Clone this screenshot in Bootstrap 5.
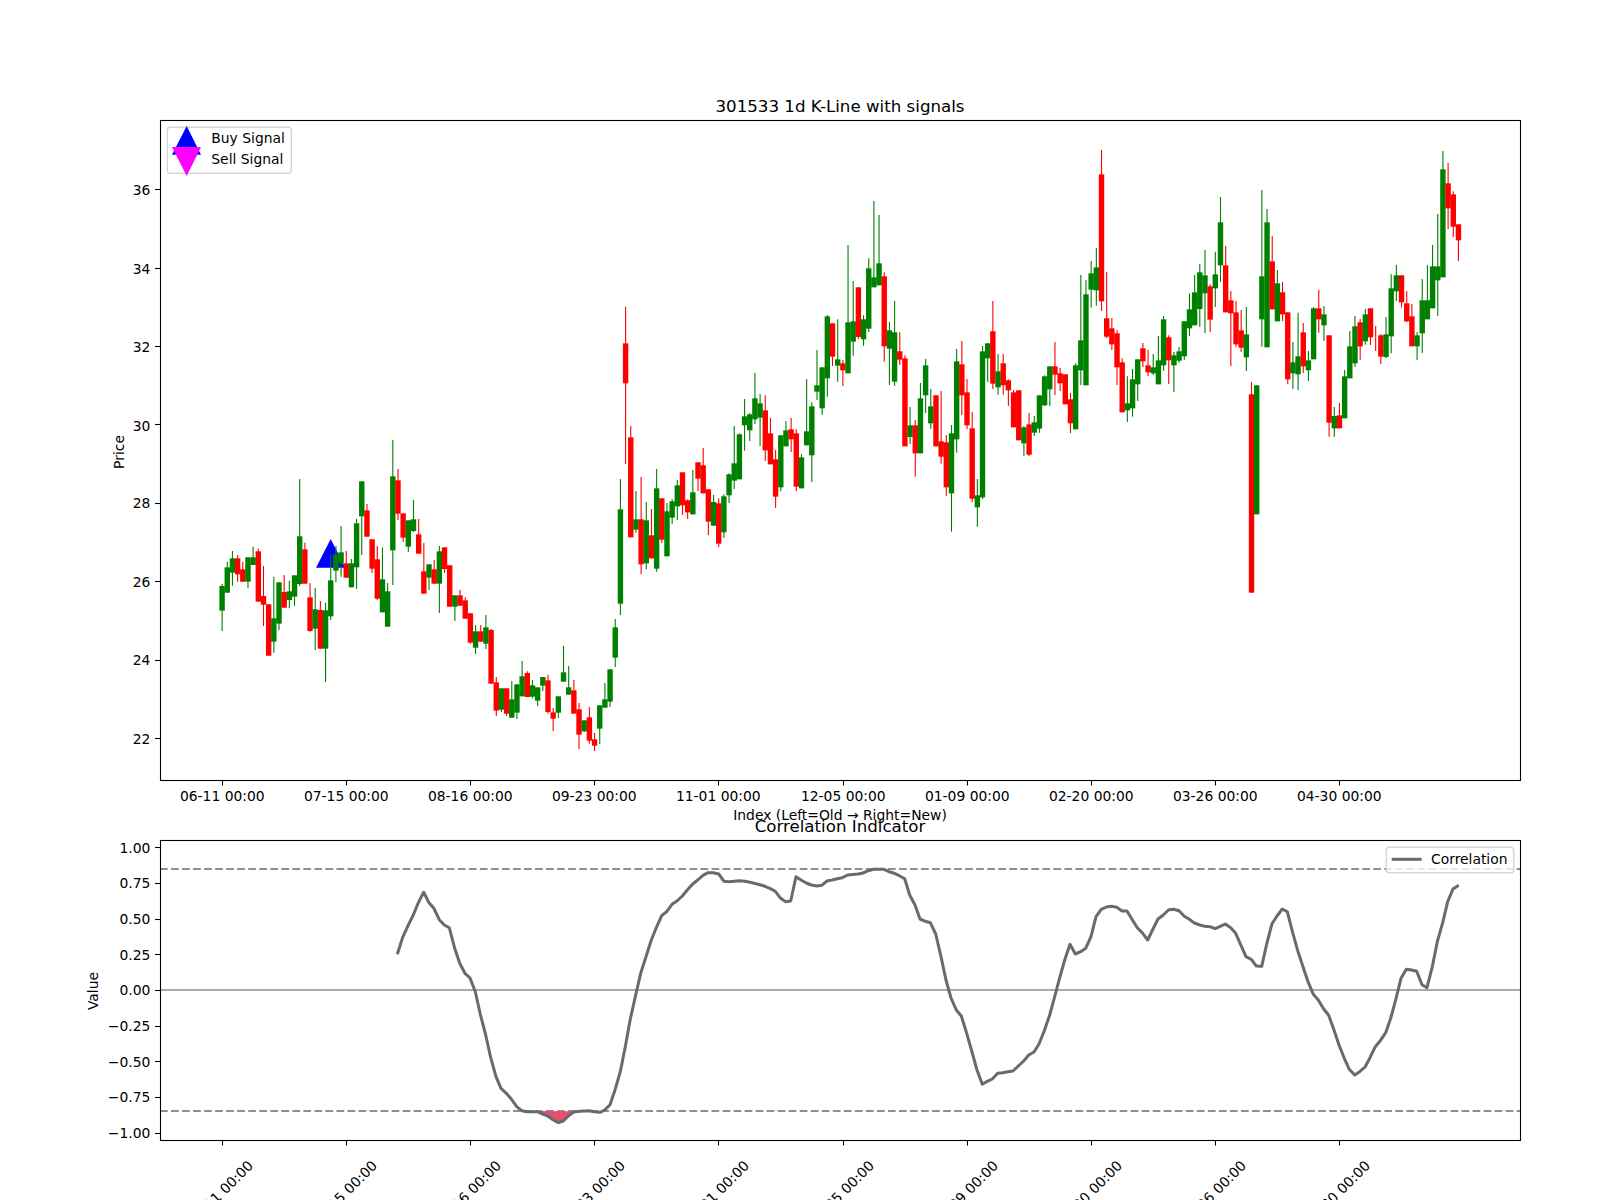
<!DOCTYPE html>
<html lang="en">
<head>
<meta charset="utf-8">
<title>301533 1d K-Line with signals</title>
<link href="https://cdn.jsdelivr.net/npm/bootstrap@5.3.0/dist/css/bootstrap.min.css" rel="stylesheet">
<style>
html,body{margin:0;background:#fff;overflow:hidden}
.figure-frame{width:1600px;height:1200px;overflow:hidden}
.figure-svg{width:1600px;height:1200px}
.figure-svg text{font-family:"DejaVu Sans",sans-serif;font-size:13.89px;fill:#000}
.figure-svg text.plot-title{font-size:16.67px}
.mid{text-anchor:middle}
.end{text-anchor:end}
.spine{fill:none;stroke:#000;stroke-width:1.1}
.tick{stroke:#000;stroke-width:1.1}
.legend-box{fill:#fff;fill-opacity:.8;stroke:#ccc;stroke-opacity:.8;stroke-width:1.4}
.refline{stroke:#8f8f8f;stroke-width:2.2;stroke-dasharray:7.7 3.33}
.zeroline{stroke:#ababab;stroke-width:2.2}
.corr{fill:none;stroke:#6a6a6a;stroke-width:3;stroke-linejoin:round}
</style>
</head>
<body>
<div class="container-fluid p-0 figure-frame">
<svg class="d-block figure-svg" viewBox="0 0 1600 1200" xmlns="http://www.w3.org/2000/svg">
  <polygon points="316,567.7 345.3,567.7 330.7,539" fill="#0000ff"/>
  <g id="candles"></g>
  <rect class="spine" x="160.5" y="120.5" width="1360" height="660"/>
  <g id="ticks"></g>

  <rect class="legend-box" x="167.3" y="127.3" width="124" height="46" rx="3"/>
  <polygon points="172,154.7 201,154.7 186.7,126" fill="#0000ff"/>
  <polygon points="172,147 201,147 186.7,176" fill="#ff00ff"/>
  <text x="211.3" y="143.3">Buy Signal</text>
  <text x="211.3" y="164">Sell Signal</text>

  <text class="plot-title mid" x="840" y="112">301533 1d K-Line with signals</text>
  <text class="mid" transform="translate(124,452) rotate(-90)">Price</text>
  <text class="end" x="150.3" y="195.2">36</text>
  <text class="end" x="150.3" y="273.6">34</text>
  <text class="end" x="150.3" y="352">32</text>
  <text class="end" x="150.3" y="430.6">30</text>
  <text class="end" x="150.3" y="508.4">28</text>
  <text class="end" x="150.3" y="587.2">26</text>
  <text class="end" x="150.3" y="665.2">24</text>
  <text class="end" x="150.3" y="744">22</text>

  <text class="mid" x="222.3" y="801">06-11 00:00</text>
  <text class="mid" x="346.3" y="801">07-15 00:00</text>
  <text class="mid" x="470.3" y="801">08-16 00:00</text>
  <text class="mid" x="594.3" y="801">09-23 00:00</text>
  <text class="mid" x="718.3" y="801">11-01 00:00</text>
  <text class="mid" x="843.3" y="801">12-05 00:00</text>
  <text class="mid" x="967.3" y="801">01-09 00:00</text>
  <text class="mid" x="1091.3" y="801">02-20 00:00</text>
  <text class="mid" x="1215.3" y="801">03-26 00:00</text>
  <text class="mid" x="1339.3" y="801">04-30 00:00</text>
  <text class="mid" x="840" y="820">Index (Left=Old → Right=New)</text>
  <text class="plot-title mid" x="840" y="831.7">Correlation Indicator</text>

  <line class="zeroline" x1="160" x2="1520" y1="990" y2="990"/>
  <line class="refline" x1="160" x2="1520" y1="869" y2="869"/>
  <line class="refline" x1="160" x2="1520" y1="1111" y2="1111"/>
  <polygon id="fillpart" fill="#e5506f"/>
  <polyline id="corr" class="corr"/>
  <rect class="spine" x="160.5" y="840.5" width="1360" height="300"/>

  <rect class="legend-box" x="1386.3" y="847.3" width="127.4" height="25.4" rx="3"/>
  <line x1="1391.7" x2="1421.7" y1="859.3" y2="859.3" stroke="#6a6a6a" stroke-width="3"/>
  <text x="1431" y="864">Correlation</text>

  <text class="mid" transform="translate(98,991) rotate(-90)">Value</text>
  <text class="end" x="150.3" y="852.8">1.00</text>
  <text class="end" x="150.3" y="888.2">0.75</text>
  <text class="end" x="150.3" y="924.2">0.50</text>
  <text class="end" x="150.3" y="959.8">0.25</text>
  <text class="end" x="150.3" y="995.4">0.00</text>
  <text class="end" x="150.3" y="1031">−0.25</text>
  <text class="end" x="150.3" y="1066.8">−0.50</text>
  <text class="end" x="150.3" y="1102.4">−0.75</text>
  <text class="end" x="150.3" y="1138.2">−1.00</text>

  <text class="mid" transform="translate(220.5,1193) rotate(-45) translate(0,5)">06-11 00:00</text>
  <text class="mid" transform="translate(344.5,1193) rotate(-45) translate(0,5)">07-15 00:00</text>
  <text class="mid" transform="translate(468.5,1193) rotate(-45) translate(0,5)">08-16 00:00</text>
  <text class="mid" transform="translate(592.5,1193) rotate(-45) translate(0,5)">09-23 00:00</text>
  <text class="mid" transform="translate(716.5,1193) rotate(-45) translate(0,5)">11-01 00:00</text>
  <text class="mid" transform="translate(841.5,1193) rotate(-45) translate(0,5)">12-05 00:00</text>
  <text class="mid" transform="translate(965.5,1193) rotate(-45) translate(0,5)">01-09 00:00</text>
  <text class="mid" transform="translate(1089.5,1193) rotate(-45) translate(0,5)">02-20 00:00</text>
  <text class="mid" transform="translate(1213.5,1193) rotate(-45) translate(0,5)">03-26 00:00</text>
  <text class="mid" transform="translate(1337.5,1193) rotate(-45) translate(0,5)">04-30 00:00</text>
</svg>
</div>
<script src="https://cdn.jsdelivr.net/npm/bootstrap@5.3.0/dist/js/bootstrap.bundle.min.js"></script>
<script>
const NS='http://www.w3.org/2000/svg';
const sections=[
[440,`g432,438,512,573 g365,382,458,458 g333,355,398,437 r345,355,403,425 r365,388,425,425 g352,352,425,444 g320,352,375,375 r326,334,485,485 r378,468,494,558 r493,493,647,647 g410,535,605,638 g427,427,551,570 r405,456,503,503 g422,454,480,505 g406,406,470,498 g117,289,432,438 r308,328,431,431 r429,472,573,575 g444,508,566,630 r483,510,626,626 g488,511,626,726 g345,421,529,540 g318,343,392,427 g258,337,370,410 r333,370,413,413 g357,370,442,442 g237,250,382,447 g124,124,229,345 r192,211,290,290 r298,298,386,399 r319,358,476,480 g323,418,517,517 g429,454,560,560 g0,109,331,435 r87,121,221,240 r220,220,293,306 g241,241,320,336 g180,238,273,276`],
[500,`r57,103,161,161 r129,214,281,281 g193,193,233,270 r180,208,251,251 g138,154,251,339 r142,142,207,219 r196,196,320,320 g286,286,320,363 r269,286,317,317 r292,301,356,356 r340,340,428,431 g376,394,443,462 r375,394,425,425 g345,382,431,447 r387,390,551,551 r531,547,632,648 g565,565,629,636 r565,565,641,648 g543,598,653,653 g553,553,638,657 g483,529,589,589 r514,519,591,591 g540,556,590,595 g562,562,602,619 g531,531,557,573 r524,541,636,641 r624,637,656,693 g589,589,638,654 g437,517,545,545 g498,562,584,584 r540,571,641,641 r609,628,704,747 g661,661,694,696 r621,652,722,731 r699,718,737,753 g616,616,686,732 g549,598,623,623 g508,508,605,621 g357,382,473,501`],
[300,`g537,628,911,945 r20,130,250,492 r378,412,712,712 g573,658,689,698 r531,658,793,823 g606,661,790,808 r627,706,775,775 g507,565,806,815 r595,595,719,729 g609,634,769,769 g598,604,653,672 g540,556,619,660 r517,517,616,645 r598,601,637,657 g510,577,643,643 r487,487,536,573 r444,496,580,580 r568,568,665,705 g585,606,677,677 r595,610,731,741 g583,589,697,714 g520,523,586,609 g378,490,542,567 g400,403,538,538 g297,349,376,452 g340,343,391,423 g219,295,358,372 g282,310,353,438 r286,331,451,483 r354,400,493,493 r450,478,590,624 g406,406,562,574 g363,391,439,439 r354,388,418,456 r388,400,560,573 g462,472,565,565 g237,394,436,436 g307,319,466,546 g150,256,275,300`],
[190,`g532,532,655,674 g375,379,565,620 r400,400,500,528 g388,508,527,575 r510,520,541,588 g165,397,550,550 g273,394,455,497 r292,292,441,447 g376,388,448,467 g205,235,416,426 g33,262,292,292 g75,220,286,286 r247,259,469,515 g396,421,476,585 g333,427,575,587 r427,484,509,525 r496,505,769,769 g651,706,741,762 r690,706,790,860 g579,625,790,790 g507,526,616,669 g597,649,700,717 r616,616,769,769 r603,754,800,821 r735,757,892,917 g705,730,910,1025 g477,514,748,788 r453,523,616,675 r567,607,706,717 r666,715,926,936 g867,916,952,1010 g468,484,922,927 g460,460,505,576 r333,424,581,597 g492,544,592,614 r492,520,586,614 r568,571,601,648 r600,607,712,712 r601,601,751,751 g708,712,760,798 r669,703,794,798`],
[140,`g828,847,878,888 g766,766,866,878 g706,709,796,798 g679,679,748,798 r606,679,704,765 r684,700,730,753 r703,703,793,793 r759,778,850,879 g670,676,868,868 g405,601,691,735 g420,463,736,736 g363,400,449,503 g324,382,451,497 r30,103,484,513 r396,535,590,595 r534,565,613,630 r570,580,682,735 r655,667,817,817 g709,790,811,846 g687,718,805,830 g658,658,733,783 r609,625,664,681 r630,676,697,708 g642,682,700,705 g588,661,733,733 g528,538,676,692 r586,592,661,732 g636,646,676,756 g621,634,662,668 g544,544,649,660 g460,508,565,588 g405,457,556,556 g372,397,507,561 g330,406,460,579 r433,439,539,576 g335,403,445,501 g171,247,376,425 r318,376,517,517 r453,481,520,678 r483,517,613,620 r510,571,623,636 g501,583,652,693 r726,763,1358,1358 g736,736,1123,1123 g150,409,538,620 g207,247,622,622 r288,364,508,508 g390,430,544,544 r426,457,523,543 r517,517,718,733 g606,667,700,747 g518,649,703,750 r549,577,679,699 g633,661,691,723 g502,505,658,658 r450,505,538,578 g498,523,556,603 r586,586,848,890 g801,828,865,890 r789,826,865,865 g690,709,835,835 g573,619,715,715 g528,559,670,681 r537,547,619,660 g507,523,604,614 r505,505,592,615 r558,590,590,633 r582,586,650,672 g531,583,651,654 g403,445,589,640 g375,406,454,483 r406,406,487,503 r453,490,544,547 r492,529,619,619 g576,586,619,660 g417,481,580,639 g376,481,538,538 g315,379,505,505 g222,379,421,528 g33,88,412,412 r69,130,205,267 r154,163,260,291 r253,253,301,363`]
];
const layer=document.getElementById('candles');
let idx=0;
for(const [oy,txt] of sections){
  for(const tok of txt.trim().split(/\s+/)){
    const col=tok[0]==='g'?'#008000':'#ff0000';
    const [a,b,c,d]=tok.slice(1).split(',').map(v=>oy+Number(v)/3);
    const x=222.1+5.173*idx;
    const l=document.createElementNS(NS,'line');
    l.setAttribute('x1',x);l.setAttribute('x2',x);l.setAttribute('y1',a);l.setAttribute('y2',d);
    l.setAttribute('stroke',col);l.setAttribute('stroke-width','1.1');
    layer.appendChild(l);
    if(c>b){
      const r=document.createElementNS(NS,'rect');
      r.setAttribute('x',x-2.7);r.setAttribute('width',5.4);r.setAttribute('y',b);r.setAttribute('height',c-b);
      r.setAttribute('fill',col);
      layer.appendChild(r);
    }
    idx++;
  }
}
/* correlation line, traced in crop coordinates */
const z8=[[952,583],[968,532],[984,497],[1000,465],[1015,428],[1031,397],[1047,428],[1061,444],[1078,479],[1093,495],[1108,503],[1124,565],[1139,610],[1155,640],[1170,654],[1186,695],[1201,763],[1217,825],[1232,893],[1248,950],[1263,985],[1279,1000],[1294,1017],[1310,1040],[1325,1052],[1341,1055],[1372,1055],[1388,1062],[1403,1068],[1419,1079],[1435,1088],[1450,1083],[1466,1067]];
const z9=[[11,1056],[30,1054],[57,1052],[73,1055],[90,1057],[104,1050],[120,1034],[135,990],[151,935],[166,860],[181,777],[197,705],[212,640],[228,590],[244,540],[259,503],[275,467],[290,455],[306,433],[321,423],[337,408],[352,390],[368,372],[383,360],[399,346],[414,338],[430,338],[446,342],[462,364],[477,365],[508,362],[524,364],[540,367],[570,374],[585,379],[601,386],[616,394],[632,415],[647,425],[662,423],[678,350],[693,360],[709,369],[724,375],[740,378],[755,376],[771,363],[786,360],[802,356],[817,353],[833,345],[864,342],[879,339],[895,332],[910,328],[942,328],[957,335],[973,340],[988,347],[1004,356],[1019,405],[1035,435],[1050,477],[1066,484],[1081,488],[1097,522],[1113,590],[1128,660],[1143,714],[1159,750],[1174,768],[1190,820],[1205,873],[1221,930],[1237,973],[1252,964],[1267,957],[1283,940],[1298,938],[1314,935],[1329,933],[1345,918],[1361,903],[1376,885],[1392,876],[1407,852],[1423,812],[1439,765],[1454,710],[1470,650]];
const z10=[[15,597],[30,553],[46,582],[62,575],[77,565],[93,530],[108,470],[124,448],[139,441],[155,439],[170,442],[186,453],[201,453],[217,479],[232,503],[248,520],[263,540],[279,507],[294,477],[310,465],[326,449],[341,448],[357,452],[372,468],[388,478],[403,489],[419,495],[434,499],[450,500],[465,506],[481,499],[496,492],[512,503],[527,520],[543,556],[558,590],[574,598],[589,618],[605,619],[620,552],[636,491],[651,468],[667,447],[682,455],[698,518],[713,572],[729,620],[744,665],[760,703],[775,720],[791,747],[806,766],[822,810],[837,855],[853,895],[868,928],[884,945],[899,935],[915,921],[930,893],[946,860],[961,842],[977,818],[992,775],[1008,716],[1023,655],[1039,628],[1054,630],[1070,634],[1086,674],[1101,683],[1117,620],[1132,545],[1148,488],[1163,425],[1179,387],[1196,376]];
const pts=[...z8.map(p=>[80+p[0]/3,760+p[1]/3]),...z9.map(p=>[570+p[0]/3,760+p[1]/3]),...z10.map(p=>[1060+p[0]/3,760+p[1]/3])];
document.getElementById('corr').setAttribute('points',pts.map(p=>p[0].toFixed(1)+','+p[1].toFixed(1)).join(' '));
const fp=[[1372,1053],[1388,1062],[1403,1068],[1419,1079],[1435,1088],[1450,1083],[1466,1067],[1481,1054]].map(p=>[80+p[0]/3,760+p[1]/3]);
document.getElementById('fillpart').setAttribute('points',fp.map(p=>p[0].toFixed(1)+','+p[1].toFixed(1)).join(' '));
/* tick marks */
const tk=document.getElementById('ticks');
function tick(x1,y1,x2,y2){const l=document.createElementNS(NS,'line');l.setAttribute('class','tick');l.setAttribute('x1',x1);l.setAttribute('y1',y1);l.setAttribute('x2',x2);l.setAttribute('y2',y2);tk.appendChild(l);}
[222.5,346.5,470.5,594.5,718.5,843.5,967.5,1091.5,1215.5,1339.5].forEach(x=>{tick(x,780,x,785.5);tick(x,1140,x,1145.5);});
[189.5,268.5,346.5,424.5,503.5,581.5,660.5,738.5,847.5,883.5,919.5,954.5,990.5,1026.5,1061.5,1097.5,1133.5].forEach(y=>tick(155,y,160,y));
</script>
</body>
</html>
